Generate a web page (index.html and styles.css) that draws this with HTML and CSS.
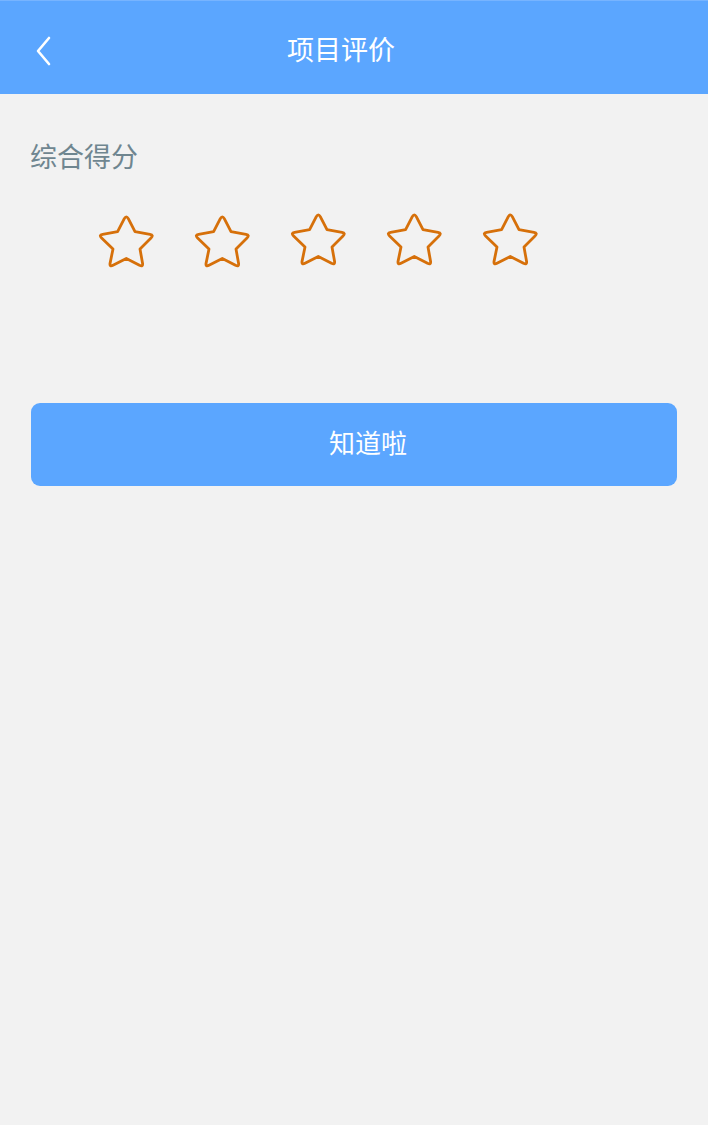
FILE: index.html
```html
<!DOCTYPE html>
<html lang="zh">
<head>
<meta charset="utf-8">
<link rel="stylesheet" href="styles.css">
</head>
<body>
<header class="topbar">
  <span class="back">
    <svg width="20" height="30" viewBox="0 0 20 30"><path d="M15 2 L4 15 L15 28" fill="none" stroke="#fff" stroke-width="2.6" stroke-linecap="round" stroke-linejoin="round"/></svg>
  </span>
  <h1 class="title">项目评价</h1>
</header>
<main class="content">
  <div class="label">综合得分</div>
  <div class="stars">
    <svg class="star" viewBox="0 0 57 56"><path d="M26.3 4.6 Q28.3 1 30.3 4.6 L37 17.7 L52 20.3 Q56 21 53 24 L42 35 L44.6 49.6 Q45 53 41.5 51.3 L28.3 44.5 L15 51.3 Q11.6 53 12 49.6 L15 35 L3.6 24 Q0.6 21 4.6 20.3 L19.6 17.7 Z"/></svg>
    <svg class="star" viewBox="0 0 57 56"><path d="M26.3 4.6 Q28.3 1 30.3 4.6 L37 17.7 L52 20.3 Q56 21 53 24 L42 35 L44.6 49.6 Q45 53 41.5 51.3 L28.3 44.5 L15 51.3 Q11.6 53 12 49.6 L15 35 L3.6 24 Q0.6 21 4.6 20.3 L19.6 17.7 Z"/></svg>
    <svg class="star up" viewBox="0 0 57 56"><path d="M26.3 4.6 Q28.3 1 30.3 4.6 L37 17.7 L52 20.3 Q56 21 53 24 L42 35 L44.6 49.6 Q45 53 41.5 51.3 L28.3 44.5 L15 51.3 Q11.6 53 12 49.6 L15 35 L3.6 24 Q0.6 21 4.6 20.3 L19.6 17.7 Z"/></svg>
    <svg class="star up" viewBox="0 0 57 56"><path d="M26.3 4.6 Q28.3 1 30.3 4.6 L37 17.7 L52 20.3 Q56 21 53 24 L42 35 L44.6 49.6 Q45 53 41.5 51.3 L28.3 44.5 L15 51.3 Q11.6 53 12 49.6 L15 35 L3.6 24 Q0.6 21 4.6 20.3 L19.6 17.7 Z"/></svg>
    <svg class="star up" viewBox="0 0 57 56"><path d="M26.3 4.6 Q28.3 1 30.3 4.6 L37 17.7 L52 20.3 Q56 21 53 24 L42 35 L44.6 49.6 Q45 53 41.5 51.3 L28.3 44.5 L15 51.3 Q11.6 53 12 49.6 L15 35 L3.6 24 Q0.6 21 4.6 20.3 L19.6 17.7 Z"/></svg>
  </div>
  <button class="ok">知道啦</button>
</main>
</body>
</html>
```
FILE: styles.css
```css
html, body {
  margin: 0;
  padding: 0;
  background: #f2f2f2;
  font-family: "Noto Sans CJK SC", "Noto Sans", sans-serif;
  height: 100%;
}
.topbar {
  height: 93px;
  background: #5ba6ff;
  border-top: 1px solid #77b4ff;
  display: flex;
  align-items: center;
  justify-content: center;
  position: relative;
}
.back {
  position: absolute;
  left: 34px;
  top: 35px;
  display: flex;
}
.title {
  margin: 0;
  color: #fff;
  font-size: 27px;
  font-weight: 400;
  line-height: 1;
  margin-left: -26px;
  margin-top: 2px;
}
.content {
  padding: 0 31px 0 30px;
}
.label {
  margin-top: 44px;
  font-size: 27px;
  line-height: 36px;
  color: #6f8690;
}
.stars {
  display: flex;
  gap: 39px;
  margin-top: 40px;
  padding-left: 68px;
  height: 56px;
}
.star {
  width: 57px;
  height: 56px;
  fill: none;
  stroke: #d6700a;
  stroke-width: 2.8;
  stroke-linejoin: round;
}
.star.up {
  margin-top: -2px;
}
.ok {
  display: block;
  width: 646px;
  height: 83px;
  margin: 133px 0 0 1px;
  background: #5ba6ff;
  border: none;
  border-radius: 9px;
  color: #fff;
  font-family: "Noto Sans CJK SC", "Noto Sans", sans-serif;
  font-size: 26px;
  padding: 0 0 6px 28px;
  line-height: 1;
}
```
